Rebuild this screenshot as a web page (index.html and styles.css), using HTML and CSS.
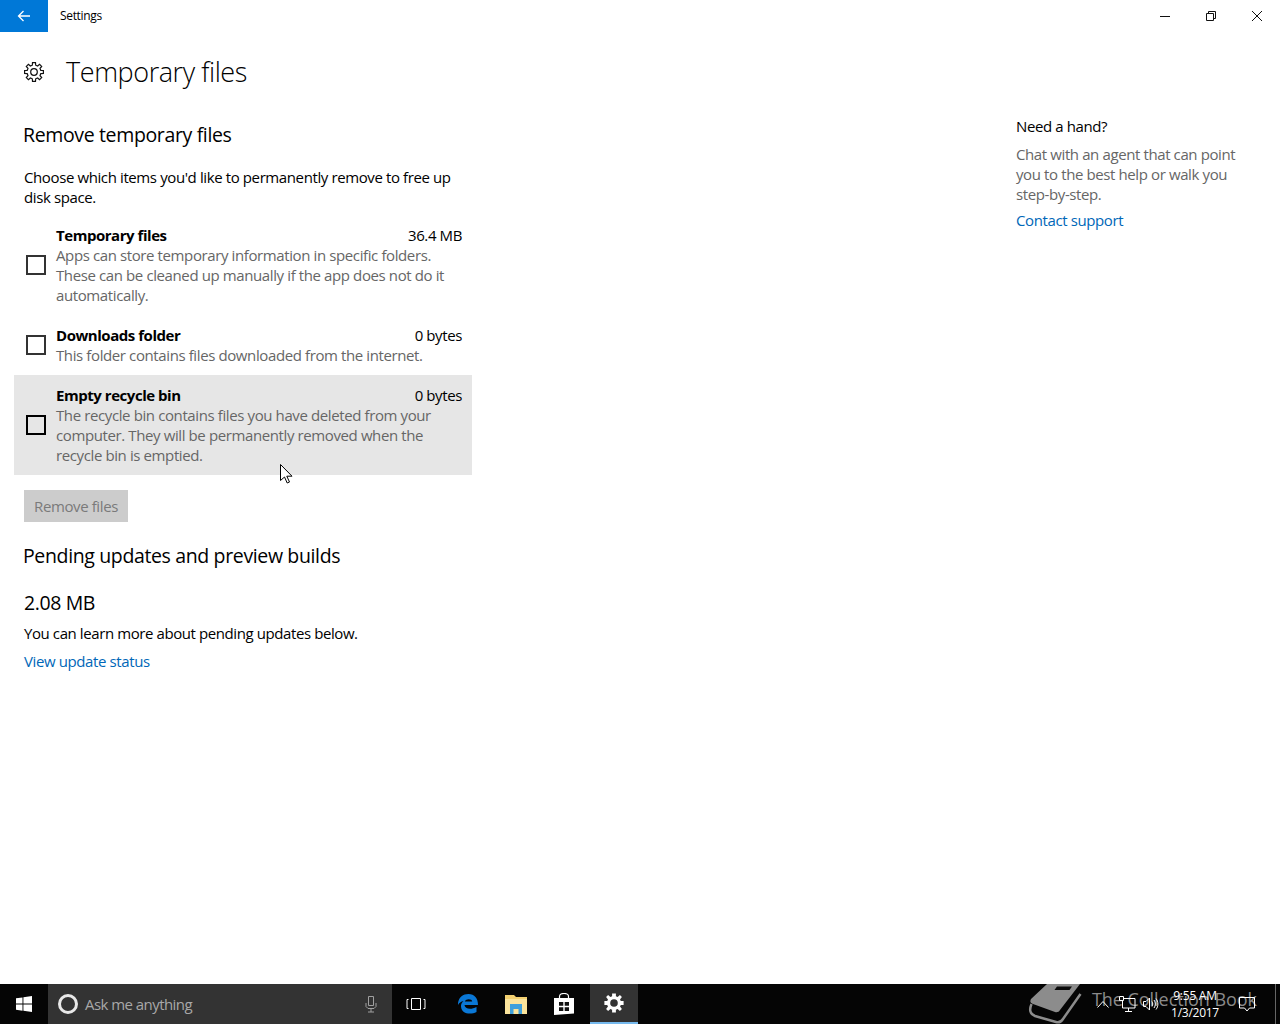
FILE: index.html
```html
<!DOCTYPE html>
<html lang="en">
<head>
<meta charset="utf-8">
<title>Settings</title>
<link rel="stylesheet" href="styles.css">
</head>
<body>
<div class="window">
  <header class="titlebar">
    <div class="back"><svg width="16" height="16" viewBox="0 0 16 16"><path d="M14 8H2.500M7.500 3 2.500 8l5 5" fill="none" stroke="#fff" stroke-width="1.300"/></svg></div>
    <div class="apptitle">Settings</div>
    <div class="winbtns">
      <div class="winbtn"><svg width="12" height="12" viewBox="0 0 12 12"><path d="M1 6.500h10" stroke="#111" fill="none"/></svg></div>
      <div class="winbtn"><svg width="12" height="12" viewBox="0 0 12 12"><path d="M1.500 3.500h7v7h-7zM3.500 3.500v-2h7v7h-2" stroke="#111" fill="none"/></svg></div>
      <div class="winbtn"><svg width="12" height="12" viewBox="0 0 12 12"><path d="M1 1l10 10M11 1 1 11" stroke="#111" fill="none"/></svg></div>
    </div>
  </header>
  <main class="content">
    <section class="left">
      <div class="pagehead">
        <svg class="gear" width="20" height="20" viewBox="-10 -10 20 20"><polygon points="-1.69,-6.79 -1.49,-9.38 1.49,-9.38 1.69,-6.79 3.61,-6 5.58,-7.69 7.69,-5.58 6,-3.61 6.79,-1.69 9.38,-1.49 9.38,1.49 6.79,1.69 6,3.61 7.69,5.58 5.58,7.69 3.61,6 1.69,6.79 1.49,9.38 -1.49,9.38 -1.69,6.79 -3.61,6 -5.58,7.69 -7.69,5.58 -6,3.61 -6.79,1.69 -9.38,1.49 -9.38,-1.49 -6.79,-1.69 -6,-3.61 -7.69,-5.58 -5.58,-7.69 -3.61,-6" fill="none" stroke="#111" stroke-width="1.200"/><circle r="3.300" fill="none" stroke="#111" stroke-width="1.200"/></svg>
        <h1>Temporary files</h1>
      </div>
      <h2 class="first">Remove temporary files</h2>
      <p class="intro">Choose which items you'd like to permanently remove to free up disk space.</p>
      <div class="items">
        <div class="item">
          <span class="check"></span>
          <div class="itembody">
            <div class="itemhead"><b>Temporary files</b><span>36.4 MB</span></div>
            <p>Apps can store temporary information in specific folders. These can be cleaned up manually if the app does not do it automatically.</p>
          </div>
        </div>
        <div class="item">
          <span class="check"></span>
          <div class="itembody">
            <div class="itemhead"><b>Downloads folder</b><span>0 bytes</span></div>
            <p>This folder contains files downloaded from the internet.</p>
          </div>
        </div>
        <div class="item hover">
          <span class="check"></span>
          <div class="itembody">
            <div class="itemhead"><b>Empty recycle bin</b><span>0 bytes</span></div>
            <p>The recycle bin contains files you have deleted from your computer. They will be permanently removed when the recycle bin is emptied.</p>
          </div>
        </div>
      </div>
      <div class="btn">Remove files</div>
      <h2 class="second">Pending updates and preview builds</h2>
      <div class="size">2.08 MB</div>
      <p class="learn">You can learn more about pending updates below.</p>
      <a class="link status">View update status</a>
    </section>
    <aside class="help">
      <div class="helphead">Need a hand?</div>
      <p>Chat with an agent that can point you to the best help or walk you step-by-step.</p>
      <a class="link">Contact support</a>
    </aside>
  </main>
  <footer class="taskbar">
    <div class="watermark">
      <svg width="54" height="40" viewBox="0 0 54 40"><path d="M19 0H52L32 26c-1 2-3 2.500-5 2L5 20c-3-1-3-3-2-5z" fill="#8c8c8c"/><path d="M29 2.500h15l-2.500 3.500H26.500z" fill="#0a0a0a"/><path d="M3.500 20C1 26 2 30 7 32l21 6c3 1 5 0 7-3L52.500 10" fill="none" stroke="#8c8c8c" stroke-width="2.500"/></svg>
      <span>The Collection Book</span>
    </div>
    <div class="tb start"><svg width="16" height="16" viewBox="0 0 16 16"><path d="M0 2.300 6.500 1.400v6.200H0zM7.400 1.300 16 0v7.600H7.400zM0 8.500h6.500v6.200L0 13.800zM7.400 8.500H16V16l-8.600-1.200z" fill="#fff"/></svg></div>
    <div class="search">
      <span class="cortana"></span>
      <span class="ask">Ask me anything</span>
      <svg class="mic" width="14" height="18" viewBox="0 0 14 18"><path d="M4.500 1.500h5v9h-5zM2 8v3.500l2 2h6l2-2V8M7 13.500V17M4 17h6" fill="none" stroke="#a0a0a0"/></svg>
    </div>
    <div class="tb taskview"><svg width="20" height="14" viewBox="0 0 20 14"><path d="M5.500 1.500h9v11h-9zM2.500 2.500H1v9h1.500M17.500 2.500H19v9h-1.500" fill="none" stroke="#fff"/></svg></div>
    <div class="tb"><svg width="22" height="22" viewBox="0 0 22 22"><path d="M1 10C2 4 6 1 11.500 1 17.500 1 21 5 21 12H7.500c.2 4 6.500 5 12 2v5c-6 3-15 2-15.500-5.500-.2-2 .8-4 2.500-5.500-2.500 .5-4.500 2-5.500 4zM7.800 8.500h7.400C15 5.500 9 5.200 7.800 8.500z" fill="#0a78d7"/></svg></div>
    <div class="tb"><svg width="22" height="19" viewBox="0 0 22 19"><path d="M0 0h9l2 2h11v5H0z" fill="#f3d070"/><path d="M0 4h22v15H0z" fill="#fbe49c"/><path d="M5 9h12v10h-3.500v-5h-5v5H5z" fill="#3ea0dc"/></svg></div>
    <div class="tb"><svg width="20" height="22" viewBox="0 0 20 22"><path d="M0 5h20v15.500L0 22z" fill="#fff"/><path d="M5.500 6V3.500C5.500 1 8 .5 10 .5s4.500 .5 4.500 3V6" fill="none" stroke="#fff" stroke-width="1.200"/><path d="M5 9h4.300v3.800H5zM10.700 9H15v3.800h-4.300zM5 14.200h4.300V18H5zM10.700 14.200H15V18h-4.300z" fill="#111"/></svg></div>
    <div class="tb active"><svg width="20" height="20" viewBox="-10 -10 20 20"><polygon points="-1.90,-6.79 -1.90,-9.60 1.90,-9.60 1.90,-6.79 3.61,-6 5.90,-7.90 7.90,-5.90 6,-3.61 6.79,-1.90 9.60,-1.90 9.60,1.90 6.79,1.90 6,3.61 7.90,5.90 5.90,7.90 3.61,6 1.90,6.79 1.90,9.60 -1.90,9.60 -1.90,6.79 -3.61,6 -5.90,7.90 -7.90,5.90 -6,3.61 -6.79,1.90 -9.60,1.90 -9.60,-1.90 -6.79,-1.90 -6,-3.61 -7.90,-5.90 -5.90,-7.90 -3.61,-6" fill="#fff"/><circle r="3.800" fill="#333"/></svg></div>
    <div class="tray">
      <div class="trayicon"><svg width="12" height="8" viewBox="0 0 12 8"><path d="M.5 7.500 6 1.500l5.500 6" fill="none" stroke="#fff"/></svg></div>
      <div class="trayicon"><svg width="18" height="16" viewBox="0 0 18 16"><path d="M4.500 2.500H17v9.500H4.500zM10.500 12v3M7 15.500h7" fill="none" stroke="#fff"/><path d="M1.500 .5h4v4h-4z" fill="#111" stroke="#fff"/></svg></div>
      <div class="trayicon"><svg width="16" height="14" viewBox="0 0 16 14"><path d="M.5 4.500h2.500l3.500-3.500v12l-3.500-3.500H.5zM9 4.500c1 1.500 1 3.500 0 5M11 3c1.800 2.300 1.800 5.700 0 8M13 1.500c2.500 3.300 2.500 7.700 0 11" fill="none" stroke="#fff"/></svg></div>
      <div class="clock"><div>9:55 AM</div><div>1/3/2017</div></div>
      <div class="notif"><svg width="16" height="15" viewBox="0 0 16 15"><path d="M.5 .5h15v10.500h-5L8 14l-2.500-3H.5z" fill="none" stroke="#fff"/></svg></div>
    </div>
    <div class="showdesk"></div>
  </footer>
  <svg class="cursor" width="13" height="20" viewBox="0 0 13 20"><path d="M.5 .5v16l4-3.500 2.700 6 2.300-1-2.700-5.800h5.200z" fill="#fff" stroke="#000"/></svg>
</div>
</body>
</html>
```
FILE: styles.css
```css
* { box-sizing: border-box; }
html, body { margin: 0; padding: 0; }
body { font-family: "Open Sans", "Noto Sans", sans-serif; font-size: 15px; color: #000; background: #fff; letter-spacing: -0.39px; }
.window { position: relative; width: 1280px; height: 1024px; display: flex; flex-direction: column; overflow: hidden; }
.titlebar { height: 32px; display: flex; align-items: center; flex: none; }
.back { width: 48px; height: 32px; background: #0078d7; display: flex; align-items: center; justify-content: center; }
.apptitle { margin: -2px 0 0 12px; font-size: 12px; letter-spacing: -0.33px; }
.winbtns { margin-left: auto; display: flex; }
.winbtn { width: 46px; height: 32px; display: flex; align-items: center; justify-content: center; }
.content { flex: 1; display: flex; justify-content: space-between; min-height: 0; }
.left { width: 472px; padding-left: 24px; }
.pagehead { display: flex; align-items: center; height: 40px; margin-top: 20px; }
.gear { flex: none; }
h1 { margin: 0 0 0 22px; font-size: 27px; font-weight: 300; line-height: 40px; letter-spacing: -0.42px; }
h2 { margin: 0 0 0 -1px; font-size: 19.5px; font-weight: 400; line-height: 28px; letter-spacing: -0.36px; }
h2.first { margin-top: 29px; }
.intro { margin: 18px 0 0; line-height: 20px; width: 438px; }
.items { margin: 8px 0 0 -10px; width: 458px; }
.item { display: flex; align-items: center; padding: 10px 10px 10px 12px; }
.item.hover { background: #e6e6e6; }
.check { width: 20px; height: 20px; border: 2px solid #333; flex: none; margin-right: 10px; }
.hover .check { border-color: #000; }
.itembody { flex: 1; min-width: 0; }
.itemhead { display: flex; justify-content: space-between; line-height: 20px; }
.itemhead b { font-weight: 700; letter-spacing: -0.46px; }
.itembody p { margin: 0; color: #666; line-height: 20px; }
.btn { margin-top: 15px; width: 104px; height: 32px; background: #ccc; color: #7a7a7a; display: flex; align-items: center; justify-content: center; }
h2.second { margin-top: 20px; }
.size { margin-top: 19px; font-size: 19.5px; line-height: 28px; letter-spacing: -0.4px; }
.learn { margin: 6px 0 0; line-height: 20px; letter-spacing: -0.41px; }
.link { color: #0067b8; line-height: 20px; display: block; }
.status { margin-top: 8px; }
.help { width: 264px; padding-top: 84px; }
.helphead { line-height: 20px; }
.help p { margin: 8px 0 6px; color: #666; line-height: 20px; width: 240px; }
.taskbar { position: relative; height: 40px; flex: none; background: #050505; display: flex; align-items: center; color: #fff; overflow: hidden; }
.tb { position: relative; width: 48px; height: 40px; display: flex; align-items: center; justify-content: center; flex: none; }
.taskview { margin-right: 4px; }
.active { background: #333; border-bottom: 2px solid #76b9ed; margin-left: 2px; }
.search { position: relative; width: 344px; height: 40px; background: #333; display: flex; align-items: center; padding-left: 10px; flex: none; }
.cortana { width: 20px; height: 20px; border: 3px solid #e8e8e8; border-radius: 50%; flex: none; }
.ask { margin-left: 7px; color: #a8a8a8; letter-spacing: -0.55px; }
.mic { margin-left: auto; margin-right: 14px; }
.tray { position: relative; margin-left: auto; display: flex; align-items: center; }
.trayicon { width: 24px; height: 40px; display: flex; align-items: center; justify-content: center; }
.clock { width: 64px; text-align: center; font-size: 12px; line-height: 17px; letter-spacing: -0.25px; }
.notif { width: 40px; height: 40px; display: flex; align-items: center; justify-content: center; }
.showdesk { position: relative; width: 5px; height: 40px; margin-left: 8px; border-left: 1px solid #666; flex: none; }
.watermark { position: absolute; left: 1028px; top: 0; height: 40px; display: flex; align-items: flex-start; gap: 10px; color: #8a8a8a; font-size: 18px; font-weight: 400; letter-spacing: -0.05px; white-space: nowrap; }
.watermark span { line-height: 30px; }
.cursor { position: absolute; left: 280px; top: 464px; }
```
